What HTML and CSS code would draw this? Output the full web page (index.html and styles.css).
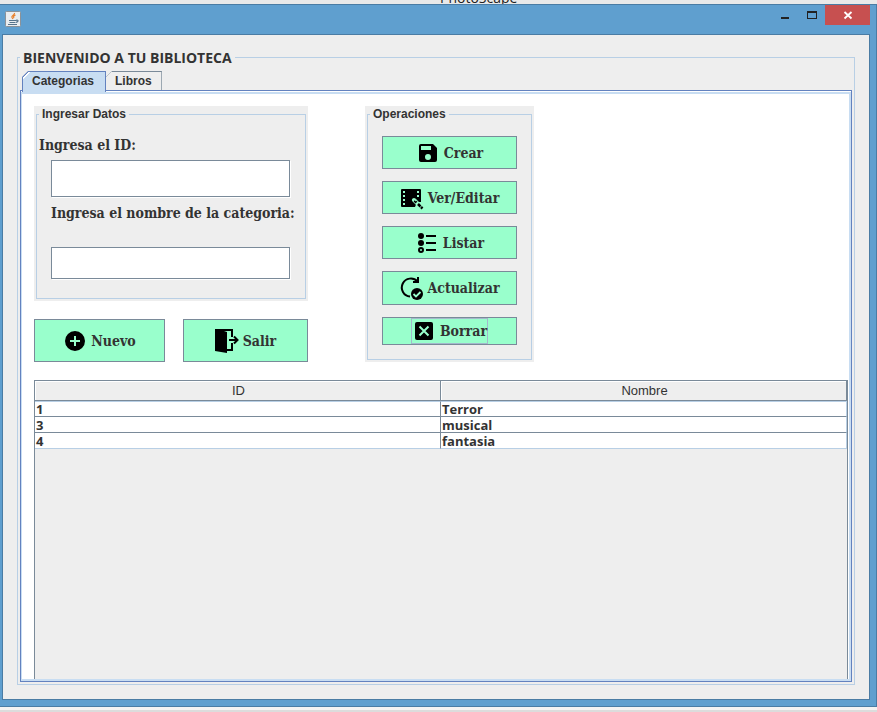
FILE: index.html
```html
<!DOCTYPE html>
<html lang="es">
<head>
<meta charset="utf-8">
<title>Biblioteca</title>
<link rel="stylesheet" href="styles.css">
</head>
<body>
<div class="desktop-top"><span class="desktop-label">PhotoScape</span></div>
<main class="window">
  <header class="titlebar">
    <svg class="app-icon" width="16" height="16" viewBox="0 0 16 16" aria-hidden="true">
      <rect x=".5" y=".5" width="15" height="15" rx="1" fill="#e9edf0" stroke="#8b9299"/>
      <path d="M9.500 2C10 4 6 4.500 7 6.500L8 8M10.500 4C8.500 5 8 5.500 9 7" fill="none" stroke="#e8812d" stroke-width="1.300"/>
      <path d="M4 9.500h7M4.500 11.500h6M3 13.500h9M11 9.300c3-.8 2.500 1.700 0 2" fill="none" stroke="#56748c" stroke-width="1.200"/>
    </svg>
    <div class="window-controls">
      <button class="control" type="button" aria-label="Minimizar"><svg width="10" height="10" viewBox="0 0 10 10"><path d="M1 7h8v2H1z" fill="#222"/></svg></button>
      <button class="control" type="button" aria-label="Maximizar"><svg width="10" height="10" viewBox="0 0 10 10"><path d="M0 1h10v8H0zM1 3v5h8V3z" fill="#222" fill-rule="evenodd"/></svg></button>
      <button class="control control-close" type="button" aria-label="Cerrar"><svg width="10" height="10" viewBox="0 0 10 10"><path d="M1.500 2l7 6.500M8.500 2l-7 6.500" stroke="#fff" stroke-width="1.800"/></svg></button>
    </div>
  </header>
  <div class="client">
    <fieldset class="library">
      <legend>BIENVENIDO A TU BIBLIOTECA</legend>
      <div class="tabs" role="tablist">
        <button class="tab tab-selected" type="button" role="tab" aria-selected="true">Categorias</button>
        <button class="tab" type="button" role="tab" aria-selected="false">Libros</button>
      </div>
      <div class="pane">
        <div class="pane-body" role="tabpanel">
          <div class="forms">
            <div class="entry">
              <div class="panel">
                <fieldset class="group group-data">
                  <legend>Ingresar Datos</legend>
                  <label class="label-id" for="id">Ingresa el ID:</label>
                  <input class="field field-id" id="id" type="text">
                  <label class="label-name" for="nombre">Ingresa el nombre de la categoria:</label>
                  <input class="field field-name" id="nombre" type="text">
                </fieldset>
              </div>
              <div class="entry-actions">
                <button class="action action-new" type="button"><svg class="icon" viewBox="0 0 24 24"><path fill-rule="evenodd" d="M12 2a10 10 0 1 0 0 20a10 10 0 0 0 0-20zM17 13h-4v4h-2v-4H7v-2h4V7h2v4h4z"/></svg>Nuevo</button>
                <button class="action action-exit" type="button"><svg class="icon" viewBox="0 0 24 24"><path d="M0 0h18v8h-2V2H9l3 1v17h4v-6h2v8h-6v2L0 22z"/><path d="M14 10h5V6l5 5-5 5v-4h-5z" fill="#9fc"/><path d="M14 11h8M19 7.500l3.500 3.500-3.500 3.500" fill="none" stroke="#000" stroke-width="2"/></svg>Salir</button>
              </div>
            </div>
            <div class="panel">
              <fieldset class="group group-operations">
                <legend>Operaciones</legend>
                <button class="action" type="button"><svg class="icon" viewBox="0 0 24 24"><path fill-rule="evenodd" d="M17 3H5a2 2 0 0 0-2 2v14a2 2 0 0 0 2 2h14a2 2 0 0 0 2-2V7zM12 19a3 3 0 1 1 0-6a3 3 0 0 1 0 6zM15 9H5V5h10z"/></svg>Crear</button>
                <button class="action" type="button"><svg class="icon" viewBox="0 0 24 24"><path fill-rule="evenodd" d="M2 3h18a1 1 0 0 1 1 1v12h-4l-2 5H2a1 1 0 0 1-1-1V4a1 1 0 0 1 1-1zM3 5v2h2V5zM3 9v2h2V9zM3 13v2h2v-2zM3 17v2h2v-2zM17 5v2h2V5zM17 9v2h2V9z"/><path d="M14 14l8.500 8.500" fill="none" stroke="#9fc" stroke-width="4" stroke-linecap="round"/><path d="M14.500 14.500l2 2M18 18l2.500 2.500M21 21l1.500 1.500" fill="none" stroke="#000" stroke-width="2.500"/><path d="M15 13.500l1.500 1.500" stroke="#9fc" stroke-width="1.500"/></svg>Ver/Editar</button>
                <button class="action" type="button"><svg class="icon" viewBox="0 0 24 24"><path d="M11 4h10v2H11zM11 11h10v2H11zM11 18h10v2H11z"/><circle cx="6" cy="5" r="3"/><circle cx="6" cy="12" r="3"/><circle cx="6" cy="19" r="2" fill="none" stroke="#000" stroke-width="2"/></svg>Listar</button>
                <button class="action action-update" type="button"><svg class="icon" viewBox="0 0 24 24"><path d="M18.500 5.500A9 9 0 1 0 11 20.500" fill="none" stroke="#000" stroke-width="2"/><path d="M20 1v6h-6V5h4V1z"/><circle cx="18" cy="18" r="6"/><path d="M14.500 18l2.500 2.500 4.500-4.500" fill="none" stroke="#9fc" stroke-width="1.800"/></svg>Actualizar</button>
                <button class="action action-delete" type="button"><span class="focus-ring"><svg class="icon" viewBox="0 0 24 24"><rect x="3" y="3" width="18" height="18" rx="2"/><path d="M7.500 7.500l9 9M16.500 7.500l-9 9" stroke="#9fc" stroke-width="2"/></svg>Borrar</span></button>
              </fieldset>
            </div>
          </div>
          <div class="table-view">
            <table>
              <thead><tr><th scope="col">ID</th><th scope="col">Nombre</th></tr></thead>
              <tbody>
                <tr><td>1</td><td>Terror</td></tr>
                <tr><td>3</td><td>musical</td></tr>
                <tr><td>4</td><td>fantasia</td></tr>
              </tbody>
            </table>
          </div>
        </div>
      </div>
    </fieldset>
  </div>
</main>
<div class="desktop-bottom"></div>
</body>
</html>
```
FILE: styles.css
```css
* { box-sizing: border-box; }

:root {
  --line: #7a8a99;
  --soft: #b8cfe5;
  --tab: #c8ddf2;
  --edge: #6382bf;
  --face: #eeeeee;
  --mint: #99ffcc;
  --ink: #333333;
  --frame: #4a7ca4;
}

body {
  display: flex;
  flex-direction: column;
  height: 100vh;
  margin: 0;
  overflow: hidden;
  background: #f3f3f3;
  color: var(--ink);
  font: bold 12px/16px "Liberation Sans", Arial, sans-serif;
}

button, input { color: inherit; font: inherit; border-radius: 0; }
fieldset { min-width: 0; margin: 0; }

.desktop-top {
  display: flex;
  align-items: flex-end;
  flex: none;
  height: 4px;
  padding-left: 440px;
  overflow: hidden;
  background: #e9e9e9;
}
.desktop-label { font: 14px/12px "Open Sans", sans-serif; color: #222; }
.desktop-bottom { flex: none; height: 5px; border-bottom: 2px solid #dcdcdc; }

.window {
  display: flex;
  flex: 1;
  flex-direction: column;
  min-height: 0;
  padding: 0 6px 6px 2px;
  border: solid var(--frame);
  border-width: 1px 1px 1px 0;
  background: #5f9fcf;
}
.titlebar { display: flex; justify-content: space-between; flex: none; height: 29px; padding: 6px 0 0 3px; }
.window-controls { display: flex; align-items: flex-start; margin-top: -6px; }
.control { display: flex; align-items: center; justify-content: center; width: 27px; height: 20px; padding: 0; border: 0; background: none; }
.control-close { width: 45px; background: #c75050; }

.client {
  display: flex;
  flex: 1;
  min-height: 0;
  padding: 13px 14px 14px;
  border: 1px solid var(--frame);
  background: var(--face);
}
.library {
  display: flex;
  flex: 1;
  flex-direction: column;
  padding: 4px 2px 2px;
  border: 1px solid var(--soft);
}
.library > legend { padding: 0 3px; font: bold 14px/19px "Open Sans", sans-serif; }

.tabs { display: flex; align-items: flex-start; flex: none; height: 19px; padding-left: 2px; }
.tab {
  height: 19px;
  padding: 0 9px 0 8px;
  border: solid var(--line);
  border-width: 1px 1px 0;
  background: linear-gradient(135deg, var(--line) 4px, var(--face) 4px);
  clip-path: polygon(6px 0, 100% 0, 100% 100%, 0 100%, 0 6px);
}
.tab:not(.tab-selected) { border-left-width: 0; padding-left: 9px; }
.tab-selected {
  position: relative;
  z-index: 1;
  height: 21px;
  padding: 0 11px 2px 9px;
  border-color: var(--edge);
  background: linear-gradient(135deg, var(--edge) 4px, white 4px, white 5px, var(--tab) 5px);
}

.pane { display: flex; flex: 1; min-height: 0; padding-top: 1px; border: 1px solid var(--edge); background: white; }
.pane-body {
  display: flex;
  flex: 1;
  flex-direction: column;
  min-width: 0;
  padding: 12px 1px 0 12px;
  border: solid var(--tab);
  border-width: 2px 2px 2px 1px;
}

.forms { display: flex; align-items: flex-start; flex: none; gap: 57px; margin-bottom: 18px; }
.entry { display: flex; flex-direction: column; gap: 18px; }
.entry-actions { display: flex; justify-content: space-between; }
.panel { padding: 0 2px 2px; background: var(--face); }
.group { display: flex; flex-direction: column; border: 1px solid var(--soft); }
.group > legend { margin-left: 2px; padding: 0 3px; }
.group-data { padding: 15px 15px 19px 0; }
.group-operations { gap: 12px; padding: 14px; }
.group-operations > legend { margin-left: -12px; }

label, .action { font: bold 14px/16px "DejaVu Serif Condensed", "DejaVu Serif", serif; }
.label-id { margin: 0 0 7px 2px; }
.label-name { width: 239px; margin: 8px 0 26px 14px; white-space: nowrap; }
.field { width: 239px; margin-left: 14px; padding: 2px 6px; border: 1px solid var(--line); background: white; box-shadow: 1px 1px white; }
.field-id { height: 37px; }
.field-name { height: 32px; }

.action {
  display: flex;
  align-items: center;
  justify-content: center;
  gap: 4px;
  width: 135px;
  height: 33px;
  padding: 0;
  border: 1px solid var(--line);
  background: var(--mint);
}
.action-new { width: 131px; height: 43px; }
.action-exit { width: 125px; height: 43px; }
.action-update { height: 34px; }
.action-delete { height: 28px; }
.icon { flex: none; width: 24px; height: 24px; }
.focus-ring { display: flex; align-items: center; gap: 4px; height: 26px; border: 1px solid #a3b8cc; }

.table-view {
  flex: 1;
  min-height: 0;
  border: solid var(--line);
  border-width: 1px 1px 0;
  background: var(--face);
}
table { width: 100%; table-layout: fixed; border-collapse: separate; border-spacing: 0; }
th {
  height: 20px;
  padding: 1px 0 0 2px;
  border-right: 1px solid var(--line);
  border-bottom: 1px solid var(--line);
  box-shadow: inset 1px 1px white;
  font-size: 13px;
  font-weight: normal;
  line-height: 18px;
}
td {
  height: 16px;
  padding: 0 1px;
  border-right: 1px solid var(--line);
  border-bottom: 1px solid var(--line);
  background: white;
  font: bold 13px/14px "Open Sans", sans-serif;
}
tbody tr:first-child td { border-top: 1px solid var(--soft); }
tbody tr:last-child td { border-bottom-color: var(--soft); }
td:last-child { border-right-color: var(--soft); }
```
